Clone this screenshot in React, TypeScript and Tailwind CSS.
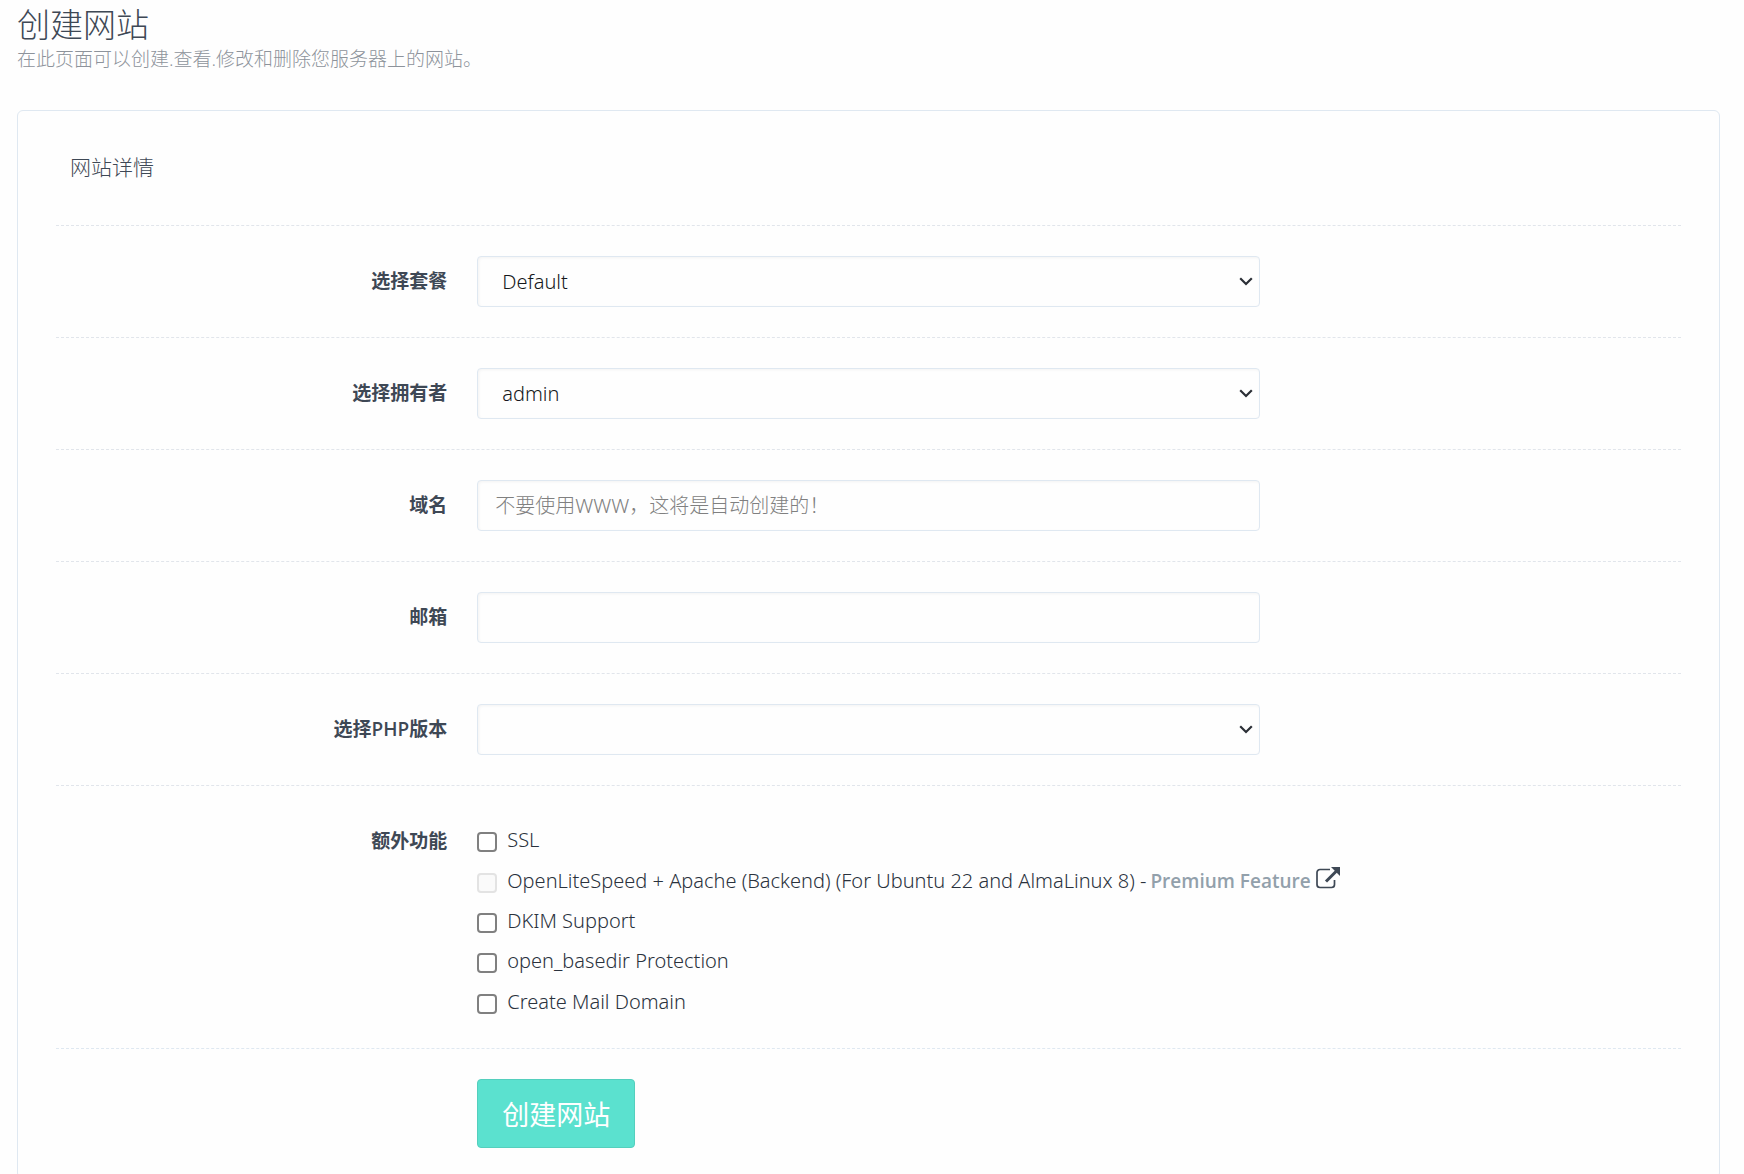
import type { ReactNode } from 'react';

const control =
  "block h-[51px] w-full rounded-sm border border-[#dfe8f1] bg-[#fefefe] font-['Noto_Sans','Noto_Sans_CJK_SC',sans-serif] text-[20px] font-light text-[#15181b] shadow-[inset_1px_1px_3px_#f3f3f3] outline-none";

function Row({ label, htmlFor, children }: { label: string; htmlFor?: string; children: ReactNode }) {
  return (
    <div className="grid grid-cols-4 border-t border-dashed border-[#e1e5eb] py-[30px]">
      <label
        htmlFor={htmlFor}
        className="px-[15px] pt-[11px] text-right text-[19px] leading-7 font-semibold text-[#3e4855]"
      >
        {label}
      </label>
      <div className="col-span-2 px-[15px]">{children}</div>
    </div>
  );
}

function Select({ id, options }: { id: string; options: string[] }) {
  return (
    <div className="relative">
      <select id={id} className={`${control} appearance-none pr-10 pl-6`}>
        {options.map((option) => (
          <option key={option}>{option}</option>
        ))}
      </select>
      <svg
        viewBox="0 0 14 9"
        className="pointer-events-none absolute top-[21px] right-[7px] h-[9px] w-[14px]"
        fill="none"
        stroke="#2b2f36"
        strokeWidth="2.2"
      >
        <path d="M1.2 1.2 7 7l5.800-5.800" />
      </svg>
    </div>
  );
}

function CheckOption({ id, text, disabled, children }: { id: string; text: string; disabled?: boolean; children?: ReactNode }) {
  return (
    <div className="flex items-center whitespace-nowrap">
      <input
        id={id}
        type="checkbox"
        disabled={disabled}
        className="mt-1 mr-2.5 size-5 shrink-0 appearance-none rounded border-2 border-[#808080] bg-white checked:bg-[#767676] disabled:border-[#e3e3e3] disabled:bg-[#fafafa]"
      />
      <label htmlFor={id}>{text}</label>
      {children}
    </div>
  );
}

function ExternalIcon() {
  return (
    <svg viewBox="0 0 24 22" className="mb-1.5 ml-[5px] h-[22px] w-6" fill="none" stroke="#3e4855">
      <path d="M14 2.500H4A3 3 0 0 0 1 5.500V17.500A3 3 0 0 0 4 20.500H15.500A3 3 0 0 0 18.500 17.500V13" strokeWidth="1.700" />
      <path d="M10 14.500 20.500 4" strokeWidth="3" />
      <path d="M15 0h9v9Z" fill="#3e4855" stroke="none" />
    </svg>
  );
}

export default function App() {
  return (
    <main className="min-h-screen bg-[#fefefe] px-[17px] pb-5 font-['Open_Sans','Noto_Sans_CJK_SC',sans-serif] text-[#3e4855]">
      <header>
        <h1 className="pt-[5px] text-[33px] leading-10 font-light">创建网站</h1>
        <p className="text-[19px] leading-7 font-light text-[#8d939b]">
          在此页面可以创建.查看.修改和删除您服务器上的网站。
        </p>
      </header>

      <section className="mt-[37px] mr-[7px] rounded-md border border-[#dfe8f1] px-[38px] pt-10">
        <h2 className="h-[74px] px-3.5 text-[21px] leading-8 font-light">网站详情</h2>
        <form onSubmit={(e) => e.preventDefault()}>
          <Row label="选择套餐" htmlFor="package">
            <Select id="package" options={['Default']} />
          </Row>
          <Row label="选择拥有者" htmlFor="owner">
            <Select id="owner" options={['admin']} />
          </Row>
          <Row label="域名" htmlFor="domain">
            <input
              id="domain"
              type="text"
              placeholder="不要使用WWW，这将是自动创建的！"
              className={`${control} px-[17px] placeholder:text-[#808080]`}
            />
          </Row>
          <Row label="邮箱" htmlFor="email">
            <input id="email" type="email" className={`${control} px-[17px]`} />
          </Row>
          <Row label="选择PHP版本" htmlFor="php">
            <Select id="php" options={['']} />
          </Row>
          <Row label="额外功能">
            <div className="mt-1 -mb-1 grid h-[202px] auto-rows-fr font-['Noto_Sans'] text-[20px] leading-7 font-light text-[#2a323d]">
              <CheckOption id="ssl" text="SSL" />
              <CheckOption
                id="apache"
                disabled
                text="OpenLiteSpeed + Apache (Backend) (For Ubuntu 22 and AlmaLinux 8) -"
              >
                <a
                  href="#premium"
                  className="ml-1 flex items-center font-['Open_Sans'] text-[19px] font-semibold text-[#92a0ab]"
                >
                  Premium Feature
                  <ExternalIcon />
                </a>
              </CheckOption>
              <CheckOption id="dkim" text="DKIM Support" />
              <CheckOption id="basedir" text="open_basedir Protection" />
              <CheckOption id="mail" text="Create Mail Domain" />
            </div>
          </Row>
          <div className="grid grid-cols-4 border-t border-dashed border-[#dfe8f1] py-[30px]">
            <div className="col-span-2 col-start-2 px-[15px]">
              <button
                type="submit"
                className="h-[69px] rounded-sm border border-[#54cfbd] bg-[#5be1cf] px-6 pt-0.5 text-[27px] leading-9 text-white"
              >
                创建网站
              </button>
            </div>
          </div>
        </form>
      </section>
    </main>
  );
}
